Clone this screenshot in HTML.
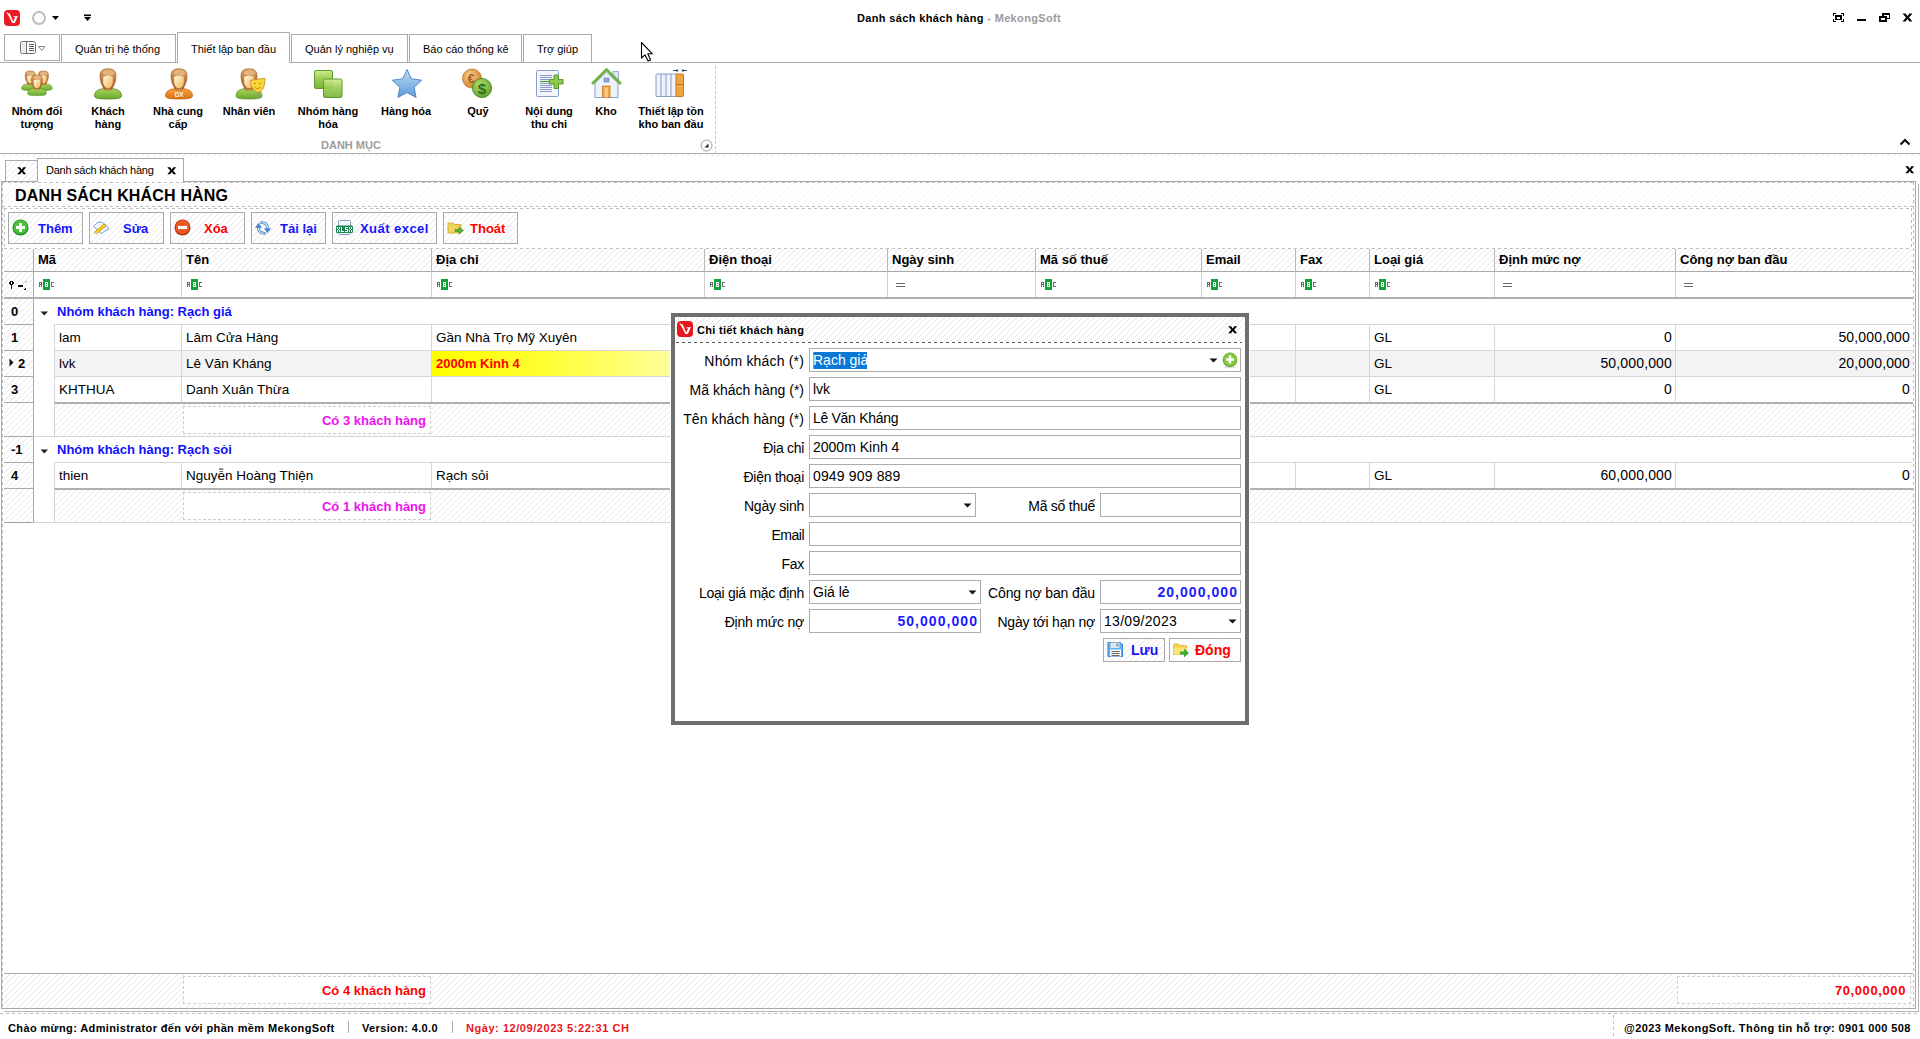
<!DOCTYPE html>
<html><head><meta charset="utf-8">
<style>
*{margin:0;padding:0;box-sizing:border-box}
html,body{width:1920px;height:1039px;overflow:hidden;background:#fff}
body{position:relative;font-family:"Liberation Sans",sans-serif;font-size:13px;color:#000}
.a{position:absolute}
.t{position:absolute;white-space:nowrap;line-height:1}
.b{font-weight:bold}
.h{background:repeating-linear-gradient(135deg,#e0e0e0 0 0.8px,#fff 0.8px 4.2426px)}
.rt{border:1px solid #ababab;border-bottom:none;background:#fff}
.rl{font-size:11px;font-weight:bold;text-align:center;line-height:13px}
.btn{position:absolute;top:212px;height:32px;border:1px solid #a9a9a9}
.btn .t{font-size:13px;font-weight:bold;top:9px}
.blue{color:#1414ff}
.red{color:#f00}
.vl{position:absolute;width:1px;background:#d6d6d6}
.hl{position:absolute;height:1px;background:#d6d6d6}
.inp{position:absolute;height:24px;border:1px solid #acacac;background:#fff}
.lbl{position:absolute;white-space:nowrap;line-height:1;font-size:14px;text-align:right}
</style></head><body>

<!-- ===== TITLE BAR ===== -->
<div class="a" style="left:4px;top:10px;width:16px;height:16px;background:#ec1c24;border-radius:4px"><svg width="16" height="16" style="position:absolute;left:0;top:0"><path d="M2.2 2.6L3.2 2.2L4.6 3.6L5.6 3.2L9.2 11.6L11.3 7.2H9.7L9.4 6.2H14.2L13.3 7.2L10.9 12.9H8.3L4.4 5.2Z" fill="#fff"/></svg></div>
<div class="a" style="left:32px;top:11px;width:14px;height:14px;border:2px solid #bdbdbd;border-radius:50%"></div>
<svg class="a" style="left:51px;top:15px" width="9" height="6"><path d="M1 1 H8 L4.5 5 Z" fill="#000"/></svg>
<svg class="a" style="left:83px;top:14px" width="9" height="8"><rect x="1" y="0.5" width="7" height="1.6" fill="#000"/><path d="M1 3 H8 L4.5 7 Z" fill="#000"/></svg>
<div class="t b" style="left:857px;top:13px;font-size:11px;letter-spacing:0.35px">Danh sách khách hàng<span style="color:#9a9a9a"> - MekongSoft</span></div>
<!-- window buttons -->
<svg class="a" style="left:1833px;top:13px" width="11" height="9" shape-rendering="crispEdges"><path d="M0 0h3v1H1v2H0zM8 0h3v3h-1V1H8zM0 6h1v2h2v1H0zM10 6h1v3H8V8h2z" fill="#000"/><path d="M2 2h7v5H2zM4 3.5v2h3v-2z" fill="#000" fill-rule="evenodd"/></svg>
<div class="a" style="left:1857px;top:19px;width:9px;height:2px;background:#000"></div>
<svg class="a" style="left:1879px;top:13px" width="11" height="9" shape-rendering="crispEdges"><path d="M3 0h8v6H8V5h2V2H5v1H3z" fill="#000"/><path d="M0 3h8v6H0zM2 4.5v2.5h4V4.5z" fill="#000" fill-rule="evenodd"/></svg>
<svg class="a" style="left:1902px;top:13px" width="11" height="9"><path d="M0.5 0.5H3.5L5.5 3L7.5 0.5H10.5L7 4.5L10.5 8.5H7.5L5.5 6L3.5 8.5H0.5L4 4.5Z" fill="#000"/></svg>

<!-- ===== RIBBON TABS ===== -->
<div class="a" style="left:0;top:62px;width:1920px;height:1px;background:#ababab"></div>
<div class="a rt" style="left:4px;top:34px;width:56px;height:27px;border-bottom:1px solid #ababab"></div>
<svg class="a" style="left:20px;top:40px" width="28" height="16"><rect x="0.5" y="1.5" width="15" height="12" rx="2" fill="#fff" stroke="#6a6a6a"/><rect x="1.5" y="3" width="4" height="9" fill="#ebebeb"/><path d="M6.5 2V13" stroke="#6a6a6a"/><path d="M9 4.5H13.5M9 6.5H13.5M9 8.5H13.5M9 10.5H13.5" stroke="#555" shape-rendering="crispEdges"/><path d="M18.5 6.5H25L21.75 10.5Z" fill="none" stroke="#8a8a8a" stroke-width="1"/></svg>
<div class="a rt" style="left:61px;top:34px;width:115px;height:28px"></div>
<div class="t" style="left:75px;top:44px;font-size:11px">Quản trị hệ thống</div>
<div class="a rt" style="left:177px;top:32px;width:113px;height:31px"></div>
<div class="t" style="left:191px;top:44px;font-size:11px">Thiết lập ban đầu</div>
<div class="a rt" style="left:291px;top:34px;width:117px;height:28px"></div>
<div class="t" style="left:305px;top:44px;font-size:11px">Quản lý nghiệp vụ</div>
<div class="a rt" style="left:409px;top:34px;width:113px;height:28px"></div>
<div class="t" style="left:423px;top:44px;font-size:11px">Báo cáo thống kê</div>
<div class="a rt" style="left:523px;top:34px;width:69px;height:28px"></div>
<div class="t" style="left:537px;top:44px;font-size:11px">Trợ giúp</div>
<!-- cursor -->
<svg class="a" style="left:640px;top:41px;z-index:50" width="14" height="22"><path d="M1.5 1.5V17L5 13.8L8 20L10.6 18.9L7.8 12.8H12.4Z" fill="#fff" stroke="#000" stroke-width="1.1" stroke-linejoin="round"/></svg>

<!-- ===== RIBBON BODY ===== -->
<svg width="0" height="0" style="position:absolute">
 <defs>
  <linearGradient id="gGreen" x1="0" y1="0" x2="0" y2="1"><stop offset="0" stop-color="#a8d85a"/><stop offset="1" stop-color="#6aa830"/></linearGradient>
  <linearGradient id="gOrange" x1="0" y1="0" x2="0" y2="1"><stop offset="0" stop-color="#f7a540"/><stop offset="1" stop-color="#d9700f"/></linearGradient>
  <linearGradient id="gFace" x1="0" y1="0" x2="1" y2="1"><stop offset="0" stop-color="#fffbe8"/><stop offset="1" stop-color="#f0b54a"/></linearGradient>
  <linearGradient id="gHair" x1="0" y1="0" x2="0" y2="1"><stop offset="0" stop-color="#dca366"/><stop offset="1" stop-color="#a4541c"/></linearGradient>
  <linearGradient id="gStar" x1="0" y1="0" x2="0" y2="1"><stop offset="0" stop-color="#bcdcf7"/><stop offset="1" stop-color="#5e9ad8"/></linearGradient>
  <symbol id="head" viewBox="0 0 32 32">
   <path d="M8 9.5 C7.5 2.5 11 0.8 16 0.8 C21 0.8 24.5 2.5 24 9.5 C23.8 14 22 17 20.5 20 L19 22 H13 L11.5 20 C10 17 8.2 14 8 9.5Z" fill="url(#gHair)" stroke="#9a5a24" stroke-width="0.6"/>
   <ellipse cx="16.5" cy="5" rx="5.8" ry="2.9" fill="#e3b57c"/>
   <path d="M11.2 8.8 C13 7.6 19 7.6 20.8 8.8 L20.8 15 C20.2 18.6 18.2 20.3 16 20.3 C13.8 20.3 11.8 18.6 11.2 15Z" fill="url(#gFace)"/>
   <path d="M13 20 L13.5 22.5 H18.5 L19 20 C18 21 14 21 13 20Z" fill="#c98a52"/>
  </symbol>
  <symbol id="person" viewBox="0 0 32 32">
   <path d="M2.5 28 C2.5 22 8 21 13 20.5 H19 C24 21 29.5 22 29.5 28 C29.5 30.5 24 31 16 31 C8 31 2.5 30.5 2.5 28Z" fill="url(#gGreen)" stroke="#4f8a1f" stroke-width="0.8"/>
   <use href="#head" x="0" y="0" width="32" height="32"/>
  </symbol>
 </defs>
</svg>
<!-- Nhóm đối tượng -->
<svg class="a" style="left:21px;top:70px" width="34" height="28" viewBox="0 0 34 28">
 <g transform="translate(-1.05,0.35) scale(0.65)"><use href="#person" width="32" height="32"/></g>
 <g transform="translate(12,0.35) scale(0.65)"><use href="#person" width="32" height="32"/></g>
 <g transform="translate(4.96,4.3) scale(0.69)"><use href="#person" width="32" height="32"/></g>
</svg>
<!-- Khách hàng -->
<svg class="a" style="left:92px;top:68px" width="32" height="32"><use href="#person" width="32" height="32"/></svg>
<!-- Nhà cung cấp -->
<svg class="a" style="left:163px;top:68px" width="32" height="32">
 <path d="M2.5 28 C2.5 22 8 21 13 20.5 H19 C24 21 29.5 22 29.5 28 C29.5 30.5 24 31 16 31 C8 31 2.5 30.5 2.5 28Z" fill="url(#gOrange)" stroke="#c0600a" stroke-width="0.7"/>
 <use href="#head" width="32" height="32"/>
 <text x="16" y="29.3" font-family="Liberation Sans" font-weight="bold" font-size="6.3" fill="#f4f4ff" text-anchor="middle">DX</text>
</svg>
<!-- Nhân viên -->
<svg class="a" style="left:233px;top:68px" width="34" height="32">
 <path d="M3 28 C3 22 8 21 13 20.5 H19 C24 21 29 22 29 28 C29 30.5 24 31 16 31 C8 31 3 30.5 3 28Z" fill="url(#gGreen)" stroke="#5a8f25" stroke-width="0.7"/>
 <use href="#head" width="32" height="32"/>
 <path d="M17.5 12.5 C21 11.5 26.5 11 32 10.2 C32 17.5 30.5 22.5 25 24.5 C20 22.5 17.5 18.5 17.5 12.5Z" fill="#f7d838" stroke="#d08a2a" stroke-width="0.9"/>
 <path d="M21 15.5H23M26 15.5H28M21.5 19C23 21 26 21 27.5 19" stroke="#b06a10" stroke-width="0.8" fill="none"/>
 <rect x="24" y="24" width="1.6" height="7" fill="#8a95a8"/>
</svg>
<!-- Nhóm hàng hóa -->
<svg class="a" style="left:312px;top:68px" width="32" height="32">
 <defs><linearGradient id="gSq" x1="0" y1="0" x2="0" y2="1"><stop offset="0" stop-color="#cfeb8e"/><stop offset="0.5" stop-color="#98cc50"/><stop offset="1" stop-color="#78b23a"/></linearGradient></defs>
 <rect x="2.5" y="2.5" width="18" height="18" rx="1.5" fill="url(#gSq)" stroke="#5c9a2c" stroke-width="1"/>
 <rect x="11.5" y="11" width="18.5" height="18.5" rx="1.5" fill="url(#gSq)" stroke="#5c9a2c" stroke-width="1" fill-opacity="0.92"/>
</svg>
<!-- Hàng hóa -->
<svg class="a" style="left:391px;top:68px" width="32" height="32">
 <path d="M16.0 1.5 L20.5 10.9 L30.7 12.2 L23.2 19.3 L25.1 29.5 L16.0 24.6 L6.9 29.5 L8.8 19.3 L1.3 12.2 L11.5 10.9Z" fill="url(#gStar)" stroke="#4a7fc0" stroke-width="0.9" stroke-linejoin="round"/>
</svg>
<!-- Quỹ -->
<svg class="a" style="left:461px;top:68px" width="32" height="32">
 <defs><radialGradient id="gEuro" cx="0.4" cy="0.35" r="0.7"><stop offset="0" stop-color="#f8d090"/><stop offset="1" stop-color="#d07a22"/></radialGradient>
 <radialGradient id="gDol" cx="0.4" cy="0.35" r="0.7"><stop offset="0" stop-color="#b8e070"/><stop offset="1" stop-color="#5a9e28"/></radialGradient></defs>
 <circle cx="11" cy="10.5" r="9.5" fill="url(#gEuro)" stroke="#c0701c" stroke-width="0.8"/>
 <text x="10" y="14.5" font-family="Liberation Sans" font-weight="bold" font-size="12" fill="#a85a14" text-anchor="middle">€</text>
 <circle cx="21" cy="20" r="9.6" fill="url(#gDol)" stroke="#4a8a22" stroke-width="0.9"/>
 <text x="21" y="25.5" font-family="Liberation Sans" font-weight="bold" font-size="15" fill="#2f6e12" text-anchor="middle">$</text>
</svg>
<!-- Nội dung thu chi -->
<svg class="a" style="left:534px;top:68px" width="32" height="32">
 <rect x="2.5" y="2.5" width="22" height="26" rx="1" fill="#f2f5fc" stroke="#8b9dc8" stroke-width="1"/>
 <path d="M6 7.5H18M6 9.5H18M6 11.5H15M6 15.5H18M6 17.5H18M6 19.5H18M6 21.5H18M6 23.5H18" stroke="#7d90c4" stroke-width="0.9"/>
 <path d="M6 13.5H15" stroke="#3a9a22" stroke-width="1.1"/>
 <path d="M20 7H24.5V11.5H29V16H24.5V20.5H20V16H15.5V11.5H20Z" fill="#8cc850" stroke="#4f8f22" stroke-width="0.9"/>
</svg>
<!-- Kho -->
<svg class="a" style="left:591px;top:68px" width="32" height="32">
 <rect x="22" y="3.5" width="5.5" height="10" fill="#dfe6f4" stroke="#8b9dc3" stroke-width="0.8"/>
 <path d="M4 15 L15.5 4 L27 15 V29.5 H4Z" fill="#eef2fb" stroke="#8b9dc3" stroke-width="1"/>
 <path d="M1 16 L15.5 1.5 L30 16" fill="none" stroke="#71b340" stroke-width="2.6" stroke-linejoin="round"/>
 <rect x="13" y="10" width="5" height="4" fill="#8fa4d6" stroke="#6a7fb8" stroke-width="0.6"/>
 <rect x="11.5" y="18" width="7.5" height="11.5" fill="#f0a540" stroke="#c27a22" stroke-width="0.8"/>
 <rect x="13.5" y="19.5" width="3.5" height="10" fill="#f8c880"/>
</svg>
<!-- Thiết lập tồn kho ban đầu -->
<svg class="a" style="left:654px;top:68px" width="34" height="32">
 <rect x="2" y="6" width="22" height="22.5" rx="1" fill="#eef2fb" stroke="#8b9dc3" stroke-width="1"/>
 <path d="M7 6V28.5M12 6V28.5M17 6V28.5" stroke="#8b9dc3" stroke-width="1"/>
 <rect x="22" y="6" width="7.5" height="22.5" rx="1" fill="#f0a540" stroke="#c27a22" stroke-width="1"/>
 <path d="M22 16.5H29.5" stroke="#c27a22" stroke-width="1"/>
 <path d="M19 2.5H24M22.5 1L24 2.5L22.5 4M33 2.5H28M29.5 1L28 2.5L29.5 4" stroke="#3a4a6a" stroke-width="1" fill="none"/>
</svg>
<!-- labels -->
<div class="a rl" style="left:-3px;top:105px;width:80px">Nhóm đối<br>tượng</div>
<div class="a rl" style="left:68px;top:105px;width:80px">Khách<br>hàng</div>
<div class="a rl" style="left:138px;top:105px;width:80px">Nhà cung<br>cấp</div>
<div class="a rl" style="left:209px;top:105px;width:80px">Nhân viên</div>
<div class="a rl" style="left:288px;top:105px;width:80px">Nhóm hàng<br>hóa</div>
<div class="a rl" style="left:366px;top:105px;width:80px">Hàng hóa</div>
<div class="a rl" style="left:438px;top:105px;width:80px">Quỹ</div>
<div class="a rl" style="left:509px;top:105px;width:80px">Nội dung<br>thu chi</div>
<div class="a rl" style="left:566px;top:105px;width:80px">Kho</div>
<div class="a rl" style="left:621px;top:105px;width:100px">Thiết lập tồn<br>kho ban đầu</div>
<div class="t b" style="left:321px;top:140px;font-size:11px;color:#9c9c9c">DANH MỤC</div>
<svg class="a" style="left:700px;top:139px" width="13" height="13"><circle cx="6.5" cy="6.5" r="5.5" fill="#fff" stroke="#9a9a9a" stroke-width="1"/><path d="M4.5 8.5H8.5V4.5Z" fill="#222"/></svg>
<div class="a" style="left:715px;top:66px;width:1px;height:87px;background:repeating-linear-gradient(#c8c8c8 0 3px,transparent 3px 5px)"></div>
<svg class="a" style="left:1899px;top:138px" width="12" height="8"><path d="M1.5 6.5L6 2L10.5 6.5" fill="none" stroke="#000" stroke-width="2"/></svg>
<div class="a" style="left:0;top:153px;width:1920px;height:1px;background:#acacac"></div>


<!-- PANEL_START -->
<svg width="0" height="0" style="position:absolute"><defs><pattern id="hp" width="6" height="6" patternUnits="userSpaceOnUse"><path d="M0 5h1v1H0zM1 4h1v1H1zM2 3h1v1H2zM3 2h1v1H3zM4 1h1v1H4zM5 0h1v1H5z" fill="#e7e7e7" shape-rendering="crispEdges"/></pattern><pattern id="hpl" width="6" height="6" patternUnits="userSpaceOnUse"><path d="M0 5h1v1H0zM1 4h1v1H1zM2 3h1v1H2zM3 2h1v1H3zM4 1h1v1H4zM5 0h1v1H5z" fill="#f3f3f3" shape-rendering="crispEdges"/></pattern></defs></svg>
<svg class="a" style="left:0px;top:154px;" width="1920" height="3"><rect width="1920" height="3" fill="url(#hp)"/></svg>
<div class="a" style="left:5px;top:160px;width:33px;height:22px;background:#fff;border:1px solid #a9a9a9;border-bottom:none"><svg class="a" style="left:0;top:0" width="33" height="22"><rect width="33" height="22" fill="url(#hp)"/></svg></div>
<svg class="a" style="left:17px;top:167px" width="10" height="8"><path d="M0.3 0.3H3.1L4.75 2.5L6.4 0.3H9.2L6.2 3.75L9.2 7.2H6.4L4.75 5L3.1 7.2H0.3L3.3 3.75Z" fill="#000"/></svg>
<div class="a" style="left:37px;top:158px;width:147px;height:25px;border:1px solid #a9a9a9;border-bottom:none;background:#fff"></div>
<div class="t" style="left:46px;top:165px;font-size:11px;letter-spacing:-0.25px">Danh sách khách hàng</div>
<svg class="a" style="left:167px;top:167px" width="10" height="8"><path d="M0.3 0.3H3.1L4.75 2.5L6.4 0.3H9.2L6.2 3.75L9.2 7.2H6.4L4.75 5L3.1 7.2H0.3L3.3 3.75Z" fill="#000"/></svg>
<svg class="a" style="left:1905px;top:166px" width="10" height="8"><path d="M0.3 0.3H3.1L4.75 2.5L6.4 0.3H9.2L6.2 3.75L9.2 7.2H6.4L4.75 5L3.1 7.2H0.3L3.3 3.75Z" fill="#000"/></svg>
<div class="a" style="left:1918px;top:184px;width:1px;height:828px;background:#b4b4b4"></div>
<div class="a" style="left:4px;top:1011px;width:1915px;height:1px;background:#b4b4b4"></div>
<div class="a" style="left:1px;top:181px;width:1915px;height:828px;border:1px solid #a9a9a9;border-top:none;background:#fff"></div>
<div class="a" style="left:183px;top:181px;width:1733px;height:1px;background:#a9a9a9"></div>
<div class="a" style="left:1px;top:181px;width:37px;height:1px;background:#a9a9a9"></div>
<svg class="a" style="left:2px;top:182px;" width="1911" height="25"><rect width="1911" height="25" fill="url(#hpl)"/></svg>
<div class="a" style="left:2px;top:182px;width:1913px;height:1px;background:repeating-linear-gradient(90deg,#bdbdbd 0 3px,transparent 3px 6px)"></div>
<div class="a" style="left:2px;top:182px;width:1px;height:826px;background:repeating-linear-gradient(#bdbdbd 0 3px,transparent 3px 6px)"></div>
<div class="a" style="left:1913px;top:182px;width:1px;height:826px;background:repeating-linear-gradient(#bdbdbd 0 3px,transparent 3px 6px)"></div>
<div class="t b" style="left:15px;top:188px;font-size:16px;letter-spacing:0.17px">DANH SÁCH KHÁCH HÀNG</div>
<div class="a" style="left:2px;top:206px;width:1912px;height:1px;background:repeating-linear-gradient(90deg,#bdbdbd 0 3px,transparent 3px 6px)"></div>
<div class="a" style="left:4px;top:208px;width:1908px;height:1px;background:repeating-linear-gradient(90deg,#bdbdbd 0 3px,transparent 3px 6px)"></div>
<div class="a" style="left:4px;top:208px;width:1px;height:40px;background:repeating-linear-gradient(#bdbdbd 0 3px,transparent 3px 6px)"></div>
<div class="a" style="left:1911px;top:208px;width:1px;height:40px;background:repeating-linear-gradient(#bdbdbd 0 3px,transparent 3px 6px)"></div>
<div class="a" style="left:4px;top:248px;width:1908px;height:1px;background:repeating-linear-gradient(90deg,#bdbdbd 0 3px,transparent 3px 6px)"></div>
<div class="btn" style="left:8px;width:75px;background:#fff"><svg class="a" style="left:0;top:0" width="73" height="30"><rect width="73" height="30" fill="url(#hp)"/></svg><svg class="a" style="left:3px;top:6px" width="17" height="17"><circle cx="8.5" cy="8.5" r="8" fill="#1e8f1e"/><circle cx="8.5" cy="8" r="7" fill="#4cbf3c"/><path d="M8.5 4V13M4 8.5H13" stroke="#fff" stroke-width="2.8"/></svg><div class="t blue" style="left:29px;">Thêm</div></div>
<div class="btn" style="left:89px;width:75px;background:#fff"><svg class="a" style="left:0;top:0" width="73" height="30"><rect width="73" height="30" fill="url(#hp)"/></svg><svg class="a" style="left:3px;top:7px" width="17" height="16"><path d="M0.5 6.3L5 2.2H9.5L16 8.5L8 13.5Z" fill="#f4fbff" stroke="#6f92de" stroke-width="0.9" stroke-linejoin="round"/><path d="M3 12.5L11.5 5.5" stroke="#c8860a" stroke-width="3.4" stroke-linecap="round"/><path d="M3 12.5L11.5 5.5" stroke="#ffd81a" stroke-width="1.8" stroke-linecap="round"/><path d="M2.2 13.6L3.6 11.9" stroke="#f0e0c0" stroke-width="1.2"/></svg><div class="t blue" style="left:33px;">Sửa</div></div>
<div class="btn" style="left:170px;width:75px;background:#fff"><svg class="a" style="left:0;top:0" width="73" height="30"><rect width="73" height="30" fill="url(#hp)"/></svg><svg class="a" style="left:3px;top:6px" width="17" height="17"><circle cx="8.5" cy="8.5" r="8" fill="#b8300c"/><circle cx="8.5" cy="8" r="7" fill="#ea5a22"/><path d="M4 8.5H13" stroke="#fff" stroke-width="3"/></svg><div class="t red" style="left:33px;">Xóa</div></div>
<div class="btn" style="left:251px;width:75px;background:#fff"><svg class="a" style="left:0;top:0" width="73" height="30"><rect width="73" height="30" fill="url(#hp)"/></svg><svg class="a" style="left:3px;top:7px" width="17" height="16"><path d="M3.5 7.5C3.5 11.5 6 13.3 9.5 13.3" fill="none" stroke="#4a7fc8" stroke-width="2.8" stroke-linecap="round"/><path d="M3.5 7.5C3.5 11.5 6 13.3 9.5 13.3" fill="none" stroke="#d4ecfc" stroke-width="1.2"/><path d="M0 7.8H7L3.5 2.8Z" fill="#4f86cc"/><path d="M12.5 8.5C12.5 4.5 10 2.7 6.5 2.7" fill="none" stroke="#4a7fc8" stroke-width="2.8" stroke-linecap="round"/><path d="M12.5 8.5C12.5 4.5 10 2.7 6.5 2.7" fill="none" stroke="#d4ecfc" stroke-width="1.2"/><path d="M9 8.2H16L12.5 13.2Z" fill="#4f86cc"/></svg><div class="t blue" style="left:28px;">Tải lại</div></div>
<div class="btn" style="left:332px;width:105px;background:#fff"><svg class="a" style="left:0;top:0" width="103" height="30"><rect width="103" height="30" fill="url(#hp)"/></svg><svg class="a" style="left:3px;top:7px" width="17" height="16"><rect x="2.5" y="0.5" width="12" height="14" rx="1" fill="#f4f6fb" stroke="#8d9cc0" stroke-width="1"/><rect x="0" y="5.5" width="17" height="7.5" rx="1.2" fill="#1a8650"/><path d="M1 7h1v1h-1zM3 7h1v1h-1zM1 8h1v1h-1zM3 8h1v1h-1zM2 9h1v1h-1zM1 10h1v1h-1zM3 10h1v1h-1zM1 11h1v1h-1zM3 11h1v1h-1zM5 7h1v1h-1zM5 8h1v1h-1zM5 9h1v1h-1zM5 10h1v1h-1zM5 11h1v1h-1zM6 11h1v1h-1zM7 11h1v1h-1zM9 7h1v1h-1zM10 7h1v1h-1zM11 7h1v1h-1zM9 8h1v1h-1zM9 9h1v1h-1zM10 9h1v1h-1zM11 9h1v1h-1zM11 10h1v1h-1zM9 11h1v1h-1zM10 11h1v1h-1zM11 11h1v1h-1zM13 7h1v1h-1zM15 7h1v1h-1zM13 8h1v1h-1zM15 8h1v1h-1zM14 9h1v1h-1zM13 10h1v1h-1zM15 10h1v1h-1zM13 11h1v1h-1zM15 11h1v1h-1z" fill="#fff" shape-rendering="crispEdges"/></svg><div class="t blue" style="left:27px;letter-spacing:0.45px">Xuất excel</div></div>
<div class="btn" style="left:443px;width:75px;background:#fff"><svg class="a" style="left:0;top:0" width="73" height="30"><rect width="73" height="30" fill="url(#hp)"/></svg><svg class="a" style="left:3px;top:7px" width="18" height="16"><path d="M1 3H6L7.5 4.5H14V13H1Z" fill="#f2d35a" stroke="#c9a22a" stroke-width="0.8"/><path d="M8 9.5H12V7L16.5 10.5L12 14V11.5H8Z" fill="#55b542" stroke="#2f8a28" stroke-width="0.6"/></svg><div class="t red" style="left:26px;">Thoát</div></div>
<svg class="a" style="left:4px;top:249px;" width="1909" height="22"><rect width="1909" height="22" fill="url(#hp)"/></svg>
<div class="a" style="left:4px;top:271px;width:1909px;height:1px;background:#a9a9a9"></div>
<div class="a" style="left:4px;top:297px;width:1909px;height:2px;background:#b0b0b0"></div>
<div class="a" style="left:33px;top:249px;width:1px;height:23px;background:#b9b9b9"></div>
<div class="a" style="left:33px;top:272px;width:1px;height:25px;background:#d0d0d0"></div>
<div class="a" style="left:181px;top:249px;width:1px;height:23px;background:#b9b9b9"></div>
<div class="a" style="left:181px;top:272px;width:1px;height:25px;background:#d0d0d0"></div>
<div class="a" style="left:431px;top:249px;width:1px;height:23px;background:#b9b9b9"></div>
<div class="a" style="left:431px;top:272px;width:1px;height:25px;background:#d0d0d0"></div>
<div class="a" style="left:704px;top:249px;width:1px;height:23px;background:#b9b9b9"></div>
<div class="a" style="left:704px;top:272px;width:1px;height:25px;background:#d0d0d0"></div>
<div class="a" style="left:887px;top:249px;width:1px;height:23px;background:#b9b9b9"></div>
<div class="a" style="left:887px;top:272px;width:1px;height:25px;background:#d0d0d0"></div>
<div class="a" style="left:1035px;top:249px;width:1px;height:23px;background:#b9b9b9"></div>
<div class="a" style="left:1035px;top:272px;width:1px;height:25px;background:#d0d0d0"></div>
<div class="a" style="left:1201px;top:249px;width:1px;height:23px;background:#b9b9b9"></div>
<div class="a" style="left:1201px;top:272px;width:1px;height:25px;background:#d0d0d0"></div>
<div class="a" style="left:1295px;top:249px;width:1px;height:23px;background:#b9b9b9"></div>
<div class="a" style="left:1295px;top:272px;width:1px;height:25px;background:#d0d0d0"></div>
<div class="a" style="left:1369px;top:249px;width:1px;height:23px;background:#b9b9b9"></div>
<div class="a" style="left:1369px;top:272px;width:1px;height:25px;background:#d0d0d0"></div>
<div class="a" style="left:1494px;top:249px;width:1px;height:23px;background:#b9b9b9"></div>
<div class="a" style="left:1494px;top:272px;width:1px;height:25px;background:#d0d0d0"></div>
<div class="a" style="left:1675px;top:249px;width:1px;height:23px;background:#b9b9b9"></div>
<div class="a" style="left:1675px;top:272px;width:1px;height:25px;background:#d0d0d0"></div>
<div class="t b" style="left:38px;top:253px">Mã</div>
<div class="t b" style="left:186px;top:253px">Tên</div>
<div class="t b" style="left:436px;top:253px">Địa chỉ</div>
<div class="t b" style="left:709px;top:253px">Điện thoại</div>
<div class="t b" style="left:892px;top:253px">Ngày sinh</div>
<div class="t b" style="left:1040px;top:253px">Mã số thuế</div>
<div class="t b" style="left:1206px;top:253px">Email</div>
<div class="t b" style="left:1300px;top:253px">Fax</div>
<div class="t b" style="left:1374px;top:253px">Loại giá</div>
<div class="t b" style="left:1499px;top:253px">Định mức nợ</div>
<div class="t b" style="left:1680px;top:253px">Công nợ ban đầu</div>
<svg class="a" style="left:39px;top:279px" width="16" height="11" shape-rendering="crispEdges"><path d="M0 3h3v1H0zM0 4h1v4H0zM2 4h1v4H2zM0 5h3v1H0z" fill="#6a6a6a"/><rect x="4" y="0" width="7" height="11" fill="#11a03a"/><path d="M6 3h3v1H6zM6 4h1v3H6zM8 4h1v3H8zM7 5h1v1H7zM6 7h3v1H6z" fill="#fff"/><path d="M12 3h3v1h-3zM12 4h1v3h-1zM12 7h3v1h-3z" fill="#6a6a6a"/></svg>
<svg class="a" style="left:187px;top:279px" width="16" height="11" shape-rendering="crispEdges"><path d="M0 3h3v1H0zM0 4h1v4H0zM2 4h1v4H2zM0 5h3v1H0z" fill="#6a6a6a"/><rect x="4" y="0" width="7" height="11" fill="#11a03a"/><path d="M6 3h3v1H6zM6 4h1v3H6zM8 4h1v3H8zM7 5h1v1H7zM6 7h3v1H6z" fill="#fff"/><path d="M12 3h3v1h-3zM12 4h1v3h-1zM12 7h3v1h-3z" fill="#6a6a6a"/></svg>
<svg class="a" style="left:437px;top:279px" width="16" height="11" shape-rendering="crispEdges"><path d="M0 3h3v1H0zM0 4h1v4H0zM2 4h1v4H2zM0 5h3v1H0z" fill="#6a6a6a"/><rect x="4" y="0" width="7" height="11" fill="#11a03a"/><path d="M6 3h3v1H6zM6 4h1v3H6zM8 4h1v3H8zM7 5h1v1H7zM6 7h3v1H6z" fill="#fff"/><path d="M12 3h3v1h-3zM12 4h1v3h-1zM12 7h3v1h-3z" fill="#6a6a6a"/></svg>
<svg class="a" style="left:710px;top:279px" width="16" height="11" shape-rendering="crispEdges"><path d="M0 3h3v1H0zM0 4h1v4H0zM2 4h1v4H2zM0 5h3v1H0z" fill="#6a6a6a"/><rect x="4" y="0" width="7" height="11" fill="#11a03a"/><path d="M6 3h3v1H6zM6 4h1v3H6zM8 4h1v3H8zM7 5h1v1H7zM6 7h3v1H6z" fill="#fff"/><path d="M12 3h3v1h-3zM12 4h1v3h-1zM12 7h3v1h-3z" fill="#6a6a6a"/></svg>
<svg class="a" style="left:896px;top:282px" width="10" height="6" shape-rendering="crispEdges"><path d="M0 1h9v1H0zM0 4h9v1H0z" fill="#6a6a6a"/></svg>
<svg class="a" style="left:1041px;top:279px" width="16" height="11" shape-rendering="crispEdges"><path d="M0 3h3v1H0zM0 4h1v4H0zM2 4h1v4H2zM0 5h3v1H0z" fill="#6a6a6a"/><rect x="4" y="0" width="7" height="11" fill="#11a03a"/><path d="M6 3h3v1H6zM6 4h1v3H6zM8 4h1v3H8zM7 5h1v1H7zM6 7h3v1H6z" fill="#fff"/><path d="M12 3h3v1h-3zM12 4h1v3h-1zM12 7h3v1h-3z" fill="#6a6a6a"/></svg>
<svg class="a" style="left:1207px;top:279px" width="16" height="11" shape-rendering="crispEdges"><path d="M0 3h3v1H0zM0 4h1v4H0zM2 4h1v4H2zM0 5h3v1H0z" fill="#6a6a6a"/><rect x="4" y="0" width="7" height="11" fill="#11a03a"/><path d="M6 3h3v1H6zM6 4h1v3H6zM8 4h1v3H8zM7 5h1v1H7zM6 7h3v1H6z" fill="#fff"/><path d="M12 3h3v1h-3zM12 4h1v3h-1zM12 7h3v1h-3z" fill="#6a6a6a"/></svg>
<svg class="a" style="left:1301px;top:279px" width="16" height="11" shape-rendering="crispEdges"><path d="M0 3h3v1H0zM0 4h1v4H0zM2 4h1v4H2zM0 5h3v1H0z" fill="#6a6a6a"/><rect x="4" y="0" width="7" height="11" fill="#11a03a"/><path d="M6 3h3v1H6zM6 4h1v3H6zM8 4h1v3H8zM7 5h1v1H7zM6 7h3v1H6z" fill="#fff"/><path d="M12 3h3v1h-3zM12 4h1v3h-1zM12 7h3v1h-3z" fill="#6a6a6a"/></svg>
<svg class="a" style="left:1375px;top:279px" width="16" height="11" shape-rendering="crispEdges"><path d="M0 3h3v1H0zM0 4h1v4H0zM2 4h1v4H2zM0 5h3v1H0z" fill="#6a6a6a"/><rect x="4" y="0" width="7" height="11" fill="#11a03a"/><path d="M6 3h3v1H6zM6 4h1v3H6zM8 4h1v3H8zM7 5h1v1H7zM6 7h3v1H6z" fill="#fff"/><path d="M12 3h3v1h-3zM12 4h1v3h-1zM12 7h3v1h-3z" fill="#6a6a6a"/></svg>
<svg class="a" style="left:1503px;top:282px" width="10" height="6" shape-rendering="crispEdges"><path d="M0 1h9v1H0zM0 4h9v1H0z" fill="#6a6a6a"/></svg>
<svg class="a" style="left:1684px;top:282px" width="10" height="6" shape-rendering="crispEdges"><path d="M0 1h9v1H0zM0 4h9v1H0z" fill="#6a6a6a"/></svg>
<svg class="a" style="left:4px;top:272px;" width="29" height="25"><rect width="29" height="25" fill="url(#hp)"/></svg>
<svg class="a" style="left:4px;top:299px;" width="29" height="223"><rect width="29" height="223" fill="url(#hp)"/></svg>
<svg class="a" style="left:9px;top:281px" width="20" height="10" shape-rendering="crispEdges"><path d="M1 0h3v1H1zM0 1h1v2H0zM4 1h1v2H4zM1 3h3v1H1zM1 1h1v2H1zM3 1h1v2H3zM2 4h1v4H2z" fill="#111"/><path d="M9 4h5v2H9z" fill="#111"/><path d="M17 0h1v1h-1zM16 1h1v1h-1z" fill="#e08a20"/><path d="M16 7h1v1h-1zM15 8h2v1h-2z" fill="#111"/></svg>
<div class="a" style="left:33px;top:249px;width:1px;height:274px;background:#a9a9a9"></div>
<div class="a" style="left:4px;top:522px;width:29px;height:1px;background:#a0a0a0"></div>
<div class="a" style="left:4px;top:324px;width:29px;height:1px;background:#a9a9a9"></div>
<div class="a" style="left:4px;top:350px;width:29px;height:1px;background:#a9a9a9"></div>
<div class="a" style="left:4px;top:376px;width:29px;height:1px;background:#a9a9a9"></div>
<div class="a" style="left:4px;top:402px;width:29px;height:1px;background:#a9a9a9"></div>
<div class="a" style="left:4px;top:436px;width:29px;height:1px;background:#a9a9a9"></div>
<div class="a" style="left:4px;top:462px;width:29px;height:1px;background:#a9a9a9"></div>
<div class="a" style="left:4px;top:488px;width:29px;height:1px;background:#a9a9a9"></div>
<div class="t b" style="left:11px;top:305px">0</div>
<svg class="a" style="left:40px;top:311px" width="9" height="5"><path d="M0.5 0.5H8L4.25 4.5Z" fill="#222"/></svg>
<div class="t b" style="left:57px;top:305px;color:#1010ff">Nhóm khách hàng: Rạch giá</div>
<div class="a" style="left:54px;top:324px;width:1859px;height:1px;background:#d6d6d6"></div>
<div class="t b" style="left:11px;top:443px">-1</div>
<svg class="a" style="left:40px;top:449px" width="9" height="5"><path d="M0.5 0.5H8L4.25 4.5Z" fill="#222"/></svg>
<div class="t b" style="left:57px;top:443px;color:#1010ff">Nhóm khách hàng: Rạch sỏi</div>
<div class="a" style="left:54px;top:462px;width:1859px;height:1px;background:#d6d6d6"></div>
<div class="a" style="left:33px;top:436px;width:1880px;height:1px;background:#d6d6d6"></div>
<div class="a" style="left:54px;top:325px;width:1859px;height:25px;background:#fff"></div>
<div class="t b" style="left:11px;top:331px">1</div>
<div class="a" style="left:54px;top:324px;width:1859px;height:1px;background:#d6d6d6"></div>
<div class="a" style="left:54px;top:350px;width:1859px;height:1px;background:#d6d6d6"></div>
<div class="a" style="left:54px;top:324px;width:1px;height:26px;background:#d6d6d6"></div>
<div class="a" style="left:181px;top:324px;width:1px;height:26px;background:#d6d6d6"></div>
<div class="a" style="left:431px;top:324px;width:1px;height:26px;background:#d6d6d6"></div>
<div class="a" style="left:704px;top:324px;width:1px;height:26px;background:#d6d6d6"></div>
<div class="a" style="left:887px;top:324px;width:1px;height:26px;background:#d6d6d6"></div>
<div class="a" style="left:1035px;top:324px;width:1px;height:26px;background:#d6d6d6"></div>
<div class="a" style="left:1201px;top:324px;width:1px;height:26px;background:#d6d6d6"></div>
<div class="a" style="left:1295px;top:324px;width:1px;height:26px;background:#d6d6d6"></div>
<div class="a" style="left:1369px;top:324px;width:1px;height:26px;background:#d6d6d6"></div>
<div class="a" style="left:1494px;top:324px;width:1px;height:26px;background:#d6d6d6"></div>
<div class="a" style="left:1675px;top:324px;width:1px;height:26px;background:#d6d6d6"></div>
<div class="t" style="left:59px;top:331px;font-size:13.5px">lam</div>
<div class="t" style="left:186px;top:331px;font-size:13.5px">Lâm Cửa Hàng</div>
<div class="t" style="left:436px;top:331px;font-size:13.5px">Gần Nhà Trọ Mỹ Xuyên</div>
<div class="t" style="left:1374px;top:331px;font-size:13.5px">GL</div>
<div class="t" style="right:248px;top:331px;font-size:14px;top:330px;letter-spacing:0.15px">0</div>
<div class="t" style="right:10px;top:331px;font-size:14px;top:330px;letter-spacing:0.15px">50,000,000</div>
<div class="a" style="left:54px;top:351px;width:1859px;height:25px;background:#f3f3f3"></div>
<div class="a" style="left:432px;top:351px;width:272px;height:25px;background:linear-gradient(90deg,#ffff00 0%,#ffff30 40%,#ffff70 70%,#ffffb8 100%)"></div>
<svg class="a" style="left:9px;top:358px" width="5" height="9"><path d="M0.5 0.5V8.5L4.5 4.5Z" fill="#111"/></svg>
<div class="t b" style="left:18px;top:357px">2</div>
<div class="a" style="left:54px;top:350px;width:1859px;height:1px;background:#d6d6d6"></div>
<div class="a" style="left:54px;top:376px;width:1859px;height:1px;background:#d6d6d6"></div>
<div class="a" style="left:54px;top:350px;width:1px;height:26px;background:#d6d6d6"></div>
<div class="a" style="left:181px;top:350px;width:1px;height:26px;background:#d6d6d6"></div>
<div class="a" style="left:431px;top:350px;width:1px;height:26px;background:#d6d6d6"></div>
<div class="a" style="left:704px;top:350px;width:1px;height:26px;background:#d6d6d6"></div>
<div class="a" style="left:887px;top:350px;width:1px;height:26px;background:#d6d6d6"></div>
<div class="a" style="left:1035px;top:350px;width:1px;height:26px;background:#d6d6d6"></div>
<div class="a" style="left:1201px;top:350px;width:1px;height:26px;background:#d6d6d6"></div>
<div class="a" style="left:1295px;top:350px;width:1px;height:26px;background:#d6d6d6"></div>
<div class="a" style="left:1369px;top:350px;width:1px;height:26px;background:#d6d6d6"></div>
<div class="a" style="left:1494px;top:350px;width:1px;height:26px;background:#d6d6d6"></div>
<div class="a" style="left:1675px;top:350px;width:1px;height:26px;background:#d6d6d6"></div>
<div class="t" style="left:59px;top:357px;font-size:13.5px">lvk</div>
<div class="t" style="left:186px;top:357px;font-size:13.5px">Lê Văn Kháng</div>
<div class="t b red" style="left:436px;top:357px">2000m Kinh 4</div>
<div class="t" style="left:1374px;top:357px;font-size:13.5px">GL</div>
<div class="t" style="right:248px;top:357px;font-size:14px;top:356px;letter-spacing:0.15px">50,000,000</div>
<div class="t" style="right:10px;top:357px;font-size:14px;top:356px;letter-spacing:0.15px">20,000,000</div>
<div class="a" style="left:54px;top:377px;width:1859px;height:25px;background:#fff"></div>
<div class="t b" style="left:11px;top:383px">3</div>
<div class="a" style="left:54px;top:376px;width:1859px;height:1px;background:#d6d6d6"></div>
<div class="a" style="left:54px;top:402px;width:1859px;height:1px;background:#d6d6d6"></div>
<div class="a" style="left:54px;top:376px;width:1px;height:26px;background:#d6d6d6"></div>
<div class="a" style="left:181px;top:376px;width:1px;height:26px;background:#d6d6d6"></div>
<div class="a" style="left:431px;top:376px;width:1px;height:26px;background:#d6d6d6"></div>
<div class="a" style="left:704px;top:376px;width:1px;height:26px;background:#d6d6d6"></div>
<div class="a" style="left:887px;top:376px;width:1px;height:26px;background:#d6d6d6"></div>
<div class="a" style="left:1035px;top:376px;width:1px;height:26px;background:#d6d6d6"></div>
<div class="a" style="left:1201px;top:376px;width:1px;height:26px;background:#d6d6d6"></div>
<div class="a" style="left:1295px;top:376px;width:1px;height:26px;background:#d6d6d6"></div>
<div class="a" style="left:1369px;top:376px;width:1px;height:26px;background:#d6d6d6"></div>
<div class="a" style="left:1494px;top:376px;width:1px;height:26px;background:#d6d6d6"></div>
<div class="a" style="left:1675px;top:376px;width:1px;height:26px;background:#d6d6d6"></div>
<div class="t" style="left:59px;top:383px;font-size:13.5px">KHTHUA</div>
<div class="t" style="left:186px;top:383px;font-size:13.5px">Danh Xuân Thừa</div>
<div class="t" style="left:436px;top:383px;font-size:13.5px"></div>
<div class="t" style="left:1374px;top:383px;font-size:13.5px">GL</div>
<div class="t" style="right:248px;top:383px;font-size:14px;top:382px;letter-spacing:0.15px">0</div>
<div class="t" style="right:10px;top:383px;font-size:14px;top:382px;letter-spacing:0.15px">0</div>
<div class="a" style="left:54px;top:463px;width:1859px;height:25px;background:#fff"></div>
<div class="t b" style="left:11px;top:469px">4</div>
<div class="a" style="left:54px;top:462px;width:1859px;height:1px;background:#d6d6d6"></div>
<div class="a" style="left:54px;top:488px;width:1859px;height:1px;background:#d6d6d6"></div>
<div class="a" style="left:54px;top:462px;width:1px;height:26px;background:#d6d6d6"></div>
<div class="a" style="left:181px;top:462px;width:1px;height:26px;background:#d6d6d6"></div>
<div class="a" style="left:431px;top:462px;width:1px;height:26px;background:#d6d6d6"></div>
<div class="a" style="left:704px;top:462px;width:1px;height:26px;background:#d6d6d6"></div>
<div class="a" style="left:887px;top:462px;width:1px;height:26px;background:#d6d6d6"></div>
<div class="a" style="left:1035px;top:462px;width:1px;height:26px;background:#d6d6d6"></div>
<div class="a" style="left:1201px;top:462px;width:1px;height:26px;background:#d6d6d6"></div>
<div class="a" style="left:1295px;top:462px;width:1px;height:26px;background:#d6d6d6"></div>
<div class="a" style="left:1369px;top:462px;width:1px;height:26px;background:#d6d6d6"></div>
<div class="a" style="left:1494px;top:462px;width:1px;height:26px;background:#d6d6d6"></div>
<div class="a" style="left:1675px;top:462px;width:1px;height:26px;background:#d6d6d6"></div>
<div class="t" style="left:59px;top:469px;font-size:13.5px">thien</div>
<div class="t" style="left:186px;top:469px;font-size:13.5px">Nguyễn Hoàng Thiện</div>
<div class="t" style="left:436px;top:469px;font-size:13.5px">Rạch sỏi</div>
<div class="t" style="left:1374px;top:469px;font-size:13.5px">GL</div>
<div class="t" style="right:248px;top:469px;font-size:14px;top:468px;letter-spacing:0.15px">60,000,000</div>
<div class="t" style="right:10px;top:469px;font-size:14px;top:468px;letter-spacing:0.15px">0</div>
<svg class="a" style="left:54px;top:403px;" width="1859" height="33"><rect width="1859" height="33" fill="url(#hp)"/></svg>
<div class="a" style="left:54px;top:403px;width:1859px;height:1px;background:#b0b0b0"></div>
<div class="a" style="left:54px;top:402px;width:1859px;height:1px;background:#b0b0b0"></div>
<div class="a" style="left:54px;top:403px;width:1px;height:33px;background:#d0d0d0"></div>
<div class="a" style="left:183px;top:406px;width:248px;height:28px;border:1px dashed #cfcfcf;background:#fff"></div>
<div class="t b" style="right:1494px;top:414px;color:#ee10ee">Có 3 khách hàng</div>
<svg class="a" style="left:54px;top:489px;" width="1859" height="33"><rect width="1859" height="33" fill="url(#hp)"/></svg>
<div class="a" style="left:54px;top:489px;width:1859px;height:1px;background:#b0b0b0"></div>
<div class="a" style="left:54px;top:488px;width:1859px;height:1px;background:#b0b0b0"></div>
<div class="a" style="left:54px;top:489px;width:1px;height:33px;background:#d0d0d0"></div>
<div class="a" style="left:183px;top:492px;width:248px;height:28px;border:1px dashed #cfcfcf;background:#fff"></div>
<div class="t b" style="right:1494px;top:500px;color:#ee10ee">Có 1 khách hàng</div>
<div class="a" style="left:33px;top:522px;width:1880px;height:1px;background:#d6d6d6"></div>
<svg class="a" style="left:4px;top:974px;" width="1909" height="34"><rect width="1909" height="34" fill="url(#hp)"/></svg>
<div class="a" style="left:4px;top:973px;width:1909px;height:1px;background:#a9a9a9"></div>
<div class="a" style="left:183px;top:976px;width:248px;height:28px;border:1px dashed #cfcfcf;background:#fff"></div>
<div class="t b red" style="right:1494px;top:984px">Có 4 khách hàng</div>
<div class="a" style="left:1677px;top:976px;width:234px;height:28px;border:1px dashed #cfcfcf;background:#fff"></div>
<div class="t b red" style="right:14px;top:984px;letter-spacing:0.6px">70,000,000</div>
<div class="a" style="left:0;top:1013px;width:1920px;height:1px;background:repeating-linear-gradient(90deg,#bdbdbd 0 3px,transparent 3px 6px)"></div>
<div class="t b" style="left:8px;top:1023px;font-size:11px;letter-spacing:0.38px">Chào mừng: Administrator đến với phần mềm MekongSoft</div>
<div class="a" style="left:348px;top:1021px;width:1px;height:12px;background:#b0b0b0"></div>
<div class="t b" style="left:362px;top:1023px;font-size:11px;letter-spacing:0.36px">Version: 4.0.0</div>
<div class="a" style="left:452px;top:1021px;width:1px;height:12px;background:#b0b0b0"></div>
<div class="t b" style="left:466px;top:1023px;font-size:11px;letter-spacing:0.55px;color:#e8141a">Ngày: 12/09/2023 5:22:31 CH</div>
<div class="a" style="left:1613px;top:1015px;width:1px;height:23px;background:repeating-linear-gradient(#bdbdbd 0 3px,transparent 3px 6px)"></div>
<div class="t b" style="left:1624px;top:1023px;font-size:11px;letter-spacing:0.42px">@2023 MekongSoft. Thông tin hỗ trợ: 0901 000 508</div>
<!-- PANEL_END -->
<!-- DIALOG_START -->
<div class="a" style="left:671px;top:313px;width:578px;height:412px;border:4px solid #6e6e6e;background:#fff;z-index:10;box-shadow:0 0 0 1px #fff">
<svg class="a" style="left:0;top:0" width="570" height="25"><rect width="570" height="25" fill="url(#hp)"/></svg>
<div class="a" style="left:1px;top:25px;width:566px;height:1px;background:repeating-linear-gradient(90deg,#555 0 3px,transparent 3px 6px)"></div>
<div class="a" style="left:2px;top:4px;width:16px;height:16px;background:#e8171f;border-radius:4px"><svg width="16" height="16" style="position:absolute;left:0;top:0"><path d="M2.2 2.6L3.2 2.2L4.6 3.6L5.6 3.2L9.2 11.6L11.3 7.2H9.7L9.4 6.2H14.2L13.3 7.2L10.9 12.9H8.3L4.4 5.2Z" fill="#fff"/></svg></div>
<div class="t b" style="left:22px;top:8px;font-size:11px;letter-spacing:0.3px">Chi tiết khách hàng</div>
<svg class="a" style="left:553px;top:9px" width="10" height="8"><path d="M0.3 0.3H3.1L4.75 2.5L6.4 0.3H9.2L6.2 3.75L9.2 7.2H6.4L4.75 5L3.1 7.2H0.3L3.3 3.75Z" fill="#000"/></svg>
<div class="lbl" style="right:441px;top:37px;letter-spacing:0.17px">Nhóm khách (*)</div>
<div class="lbl" style="right:441px;top:66px;letter-spacing:0px">Mã khách hàng (*)</div>
<div class="lbl" style="right:441px;top:95px;letter-spacing:0.1px">Tên khách hàng (*)</div>
<div class="lbl" style="right:441px;top:124px;letter-spacing:-0.3px">Địa chỉ</div>
<div class="lbl" style="right:441px;top:153px;letter-spacing:-0.25px">Điện thoại</div>
<div class="lbl" style="right:441px;top:182px;letter-spacing:-0.25px">Ngày sinh</div>
<div class="lbl" style="right:441px;top:211px;letter-spacing:-0.5px">Email</div>
<div class="lbl" style="right:441px;top:240px;letter-spacing:-0.3px">Fax</div>
<div class="lbl" style="right:441px;top:269px;letter-spacing:-0.28px">Loại giá mặc định</div>
<div class="lbl" style="right:441px;top:298px;letter-spacing:-0.2px">Định mức nợ</div>
<div class="inp" style="left:134px;top:31px;width:432px"><div class="a" style="left:3px;top:3px;width:54px;height:17px;background:#0a78d7"></div><div class="a" style="left:3px;top:3px;width:1px;height:17px;background:#f08020"></div><div class="t" style="left:3px;top:4px;font-size:14px;color:#fff">Rạch giá</div><svg class="a" style="right:22px;top:9px" width="9" height="5"><path d="M0.5 0.5H8.5L4.5 4.5Z" fill="#111"/></svg><svg class="a" style="right:2px;top:3px" width="16" height="17"><ellipse cx="8" cy="15" rx="6" ry="1.3" fill="#ddd"/><circle cx="8" cy="7.8" r="7.3" fill="#5aaa2a"/><circle cx="8" cy="7.3" r="6.5" fill="#86c940"/><path d="M8 3.5V11.5M4 7.5H12" stroke="#fff" stroke-width="2.6"/></svg></div>
<div class="inp" style="left:134px;top:60px;width:432px"><div class="t" style="left:3px;top:4px;font-size:14px;">lvk</div></div>
<div class="inp" style="left:134px;top:89px;width:432px"><div class="t" style="left:3px;top:4px;font-size:14px;letter-spacing:-0.3px">Lê Văn Kháng</div></div>
<div class="inp" style="left:134px;top:118px;width:432px"><div class="t" style="left:3px;top:4px;font-size:14px;">2000m Kinh 4</div></div>
<div class="inp" style="left:134px;top:147px;width:432px"><div class="t" style="left:3px;top:4px;font-size:14px;letter-spacing:0.15px">0949 909 889</div></div>
<div class="inp" style="left:134px;top:176px;width:167px"><svg class="a" style="right:3px;top:9px" width="9" height="5"><path d="M0.5 0.5H8.5L4.5 4.5Z" fill="#111"/></svg></div>
<div class="inp" style="left:425px;top:176px;width:141px"></div>
<div class="lbl" style="right:150px;top:182px;letter-spacing:-0.25px">Mã số thuế</div>
<div class="inp" style="left:134px;top:205px;width:432px"></div>
<div class="inp" style="left:134px;top:234px;width:432px"></div>
<div class="inp" style="left:134px;top:263px;width:172px"><div class="t" style="left:3px;top:4px;font-size:14px;">Giá lẻ</div><svg class="a" style="right:3px;top:9px" width="9" height="5"><path d="M0.5 0.5H8.5L4.5 4.5Z" fill="#111"/></svg></div>
<div class="inp" style="left:425px;top:263px;width:141px"><div class="t b" style="right:2px;top:4px;font-size:14px;color:#1a1aff;letter-spacing:1.05px">20,000,000</div></div>
<div class="lbl" style="right:150px;top:269px;letter-spacing:-0.12px">Công nợ ban đầu</div>
<div class="inp" style="left:134px;top:292px;width:172px"><div class="t b" style="right:2px;top:4px;font-size:14px;color:#1a1aff;letter-spacing:1.05px">50,000,000</div></div>
<div class="inp" style="left:425px;top:292px;width:141px"><div class="t" style="left:3px;top:4px;font-size:14px;letter-spacing:0.3px">13/09/2023</div><svg class="a" style="right:3px;top:9px" width="9" height="5"><path d="M0.5 0.5H8.5L4.5 4.5Z" fill="#111"/></svg></div>
<div class="lbl" style="right:150px;top:298px;letter-spacing:-0.22px">Ngày tới hạn nợ</div>
<div class="a" style="left:428px;top:321px;width:62px;height:24px;border:1px solid #a9a9a9;background:#fff"><svg class="a" style="left:0;top:0" width="60" height="22"><rect width="60" height="22" fill="url(#hp)"/></svg><svg class="a" style="left:3px;top:2px" width="17" height="17"><path d="M1 1.5H13.5L15.5 3.5V15.5H1Z" fill="#5fb2ee" stroke="#2f86d6" stroke-width="1"/><rect x="3.5" y="1.5" width="9" height="5.5" fill="#e6e6e6"/><rect x="9.5" y="2.5" width="2" height="3" fill="#4aa0e0"/><rect x="3" y="8.5" width="11" height="7" fill="#fafafa"/><path d="M4.5 10.5H12.5M4.5 12.5H12.5M4.5 14.5H12.5" stroke="#555" stroke-width="0.9"/></svg><div class="t b blue" style="left:27px;top:4px;font-size:14px">Lưu</div></div>
<div class="a" style="left:494px;top:321px;width:72px;height:24px;border:1px solid #a9a9a9;background:#fff"><svg class="a" style="left:0;top:0" width="70" height="22"><rect width="70" height="22" fill="url(#hpl)"/></svg><svg class="a" style="left:3px;top:4px" width="18" height="16"><path d="M0.5 2.5Q0.5 1 2 1H5.5L7 2.5H12.5Q13.5 2.5 13.5 3.5V11.5H0.5Z" fill="#f5d64e" stroke="#d4aa24" stroke-width="0.8"/><path d="M0.5 5H13.5V11.5H0.5Z" fill="#fbe77a"/><path d="M7 8.5H11V5.5L16 10L11 14.5V11.5H7Z" fill="#3da63a"/></svg><div class="t b red" style="left:25px;top:4px;font-size:14px">Đóng</div></div>
</div>
<!-- DIALOG_END -->

</body></html>
